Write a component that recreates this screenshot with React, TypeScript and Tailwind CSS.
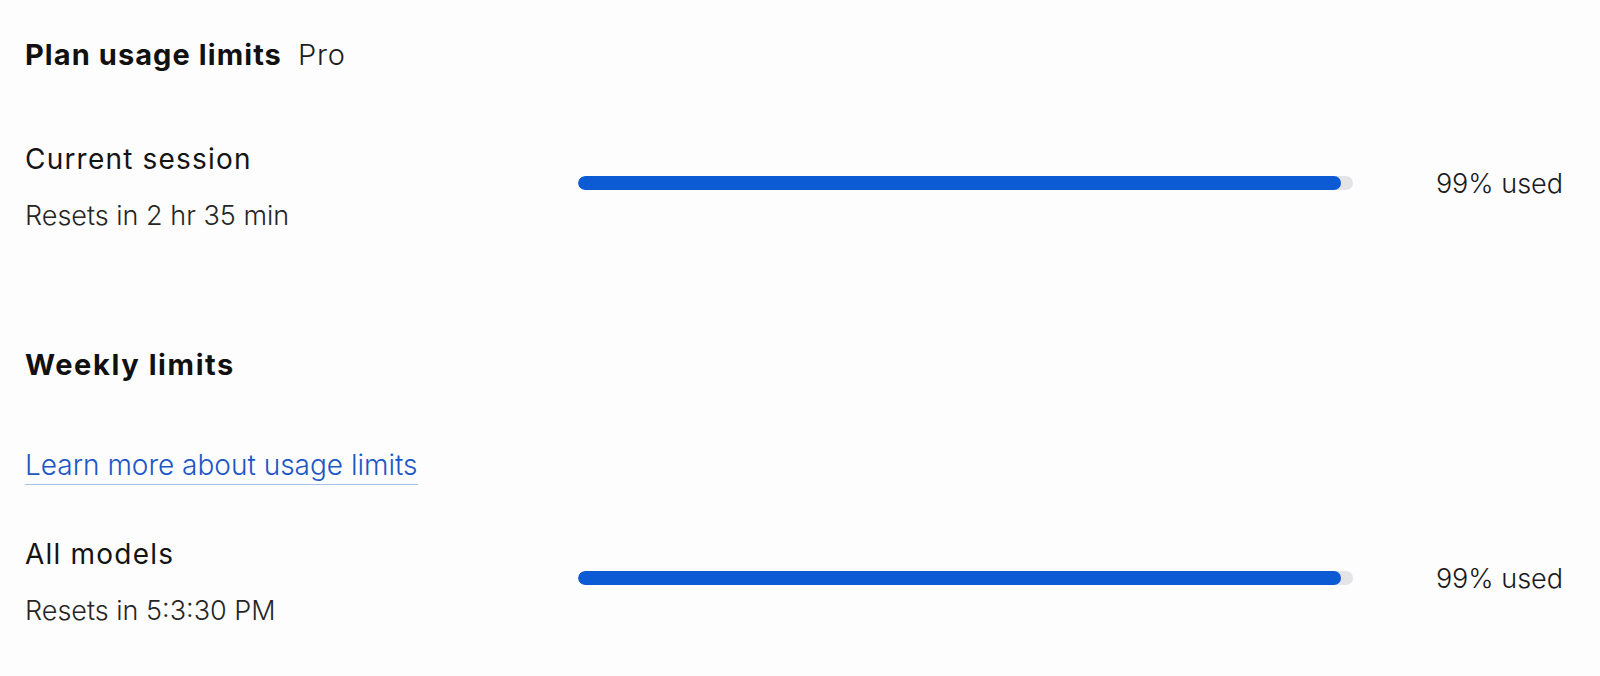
import React from 'react';

type UsageRowProps = {
  title: string;
  subtitle: string;
  percent: number;
};

const UsageRow: React.FC<UsageRowProps> = ({ title, subtitle, percent }) => (
  <div className="flex items-center">
    <div className="w-[553px] shrink-0">
      <div className="text-[28px] leading-none tracking-[0.043em] text-[#141414]">{title}</div>
      <div className="mt-[29px] text-[27px] leading-[28px] font-light text-[#262626]">{subtitle}</div>
    </div>
    <div className="w-[775px] h-[14px] rounded-full bg-[#e4e4e7] overflow-hidden -mt-[9px]">
      <div className="h-full rounded-full bg-[#0c5bd4]" style={{ width: `${percent - 0.6}%` }} />
    </div>
    <div className="ml-auto -mt-[8px] text-[27px] leading-none font-light text-[#1a1a1a]">{percent}% used</div>
  </div>
);

export default function App() {
  return (
    <div
      className="min-h-screen bg-[#fdfdfd] pl-[25px] pr-[37px] pt-[40px]"
      style={{ fontFamily: 'Inter, "Noto Sans", sans-serif' }}
    >
      <div className="flex items-baseline gap-[16px]">
        <h1 className="text-[29px] leading-none font-bold tracking-[0.037em] text-[#111]">Plan usage limits</h1>
        <span className="text-[29px] leading-none font-light tracking-[0.03em] text-[#1e1e1e]">Pro</span>
      </div>

      <div className="mt-[76px]">
        <UsageRow title="Current session" subtitle="Resets in 2 hr 35 min" percent={99} />
      </div>

      <h2 className="mt-[120px] text-[29px] leading-none font-bold tracking-[0.055em] text-[#111]">Weekly limits</h2>

      <a
        href="#"
        className="mt-[72px] block w-fit text-[28px] leading-none font-light text-[#1b57c6] border-b border-[#a9c0ea] pb-[5px]"
      >
        Learn more about usage limits
      </a>

      <div className="mt-[55px]">
        <UsageRow title="All models" subtitle="Resets in 5:3:30 PM" percent={99} />
      </div>
    </div>
  );
}
